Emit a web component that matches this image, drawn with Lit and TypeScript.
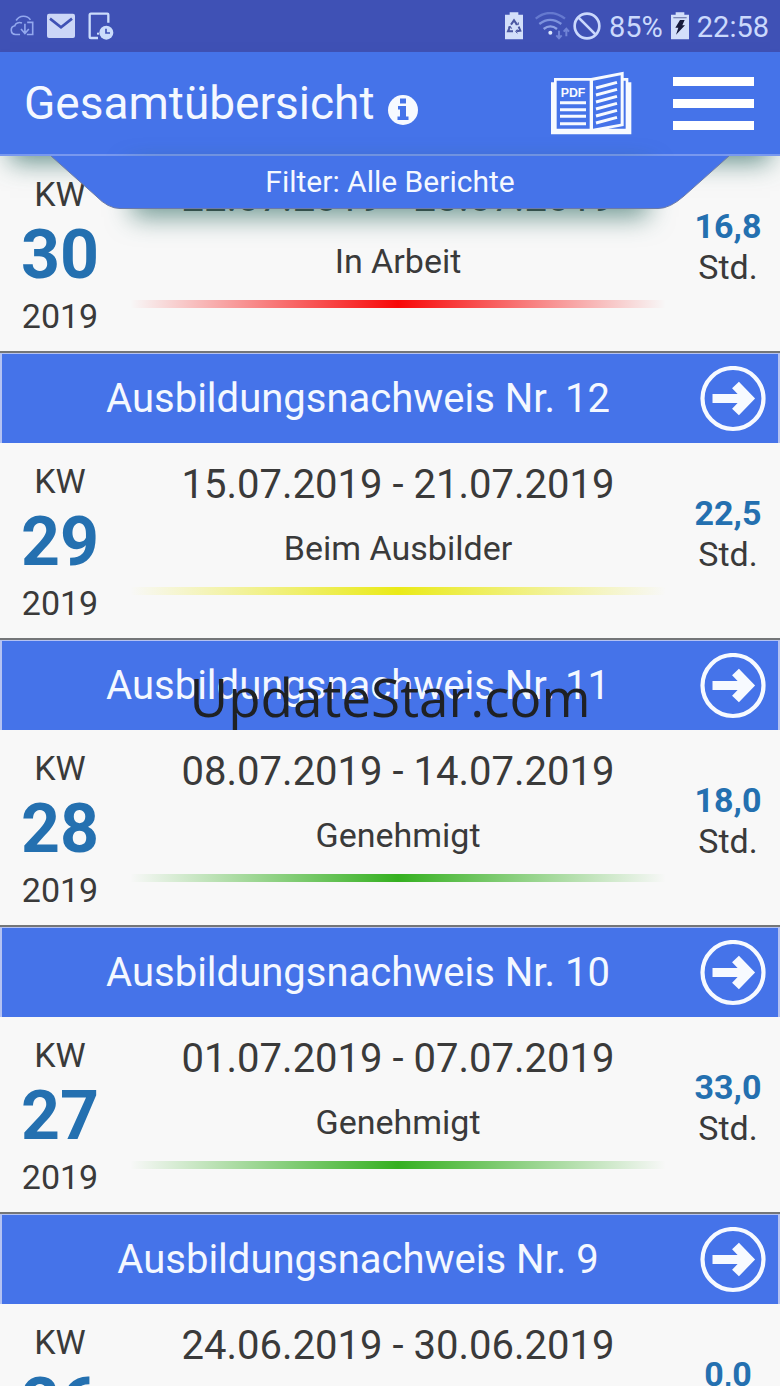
import { LitElement, html, css } from "lit";
import { customElement, property } from "lit/decorators.js";

interface Report {
  nr: number;
  week: number;
  year: number;
  range: string;
  status: string;
  tone: "red" | "yellow" | "green";
  hours: string;
}

const REPORTS: Report[] = [
  { nr: 12, week: 29, year: 2019, range: "15.07.2019 - 21.07.2019", status: "Beim Ausbilder", tone: "yellow", hours: "22,5" },
  { nr: 11, week: 28, year: 2019, range: "08.07.2019 - 14.07.2019", status: "Genehmigt", tone: "green", hours: "18,0" },
  { nr: 10, week: 27, year: 2019, range: "01.07.2019 - 07.07.2019", status: "Genehmigt", tone: "green", hours: "33,0" },
  { nr: 9, week: 26, year: 2019, range: "24.06.2019 - 30.06.2019", status: "Genehmigt", tone: "green", hours: "0,0" },
];

const CURRENT: Report = {
  nr: 13, week: 30, year: 2019, range: "22.07.2019 - 28.07.2019", status: "In Arbeit", tone: "red", hours: "16,8",
};

@customElement("status-bar")
class StatusBar extends LitElement {
  static styles = css`
    :host {
      display: flex;
      align-items: center;
      flex: none;
      height: 52px;
      padding: 0 11px 0 9px;
      box-sizing: border-box;
      background: #3f51b5;
      color: #cbd9fc;
      font-size: 29px;
      line-height: 32px;
    }
    svg { display: block; flex: none; }
    .left, .right { display: flex; align-items: center; }
    .left { gap: 13px; }
    .right { margin-left: auto; }
    .battery { margin-right: 12px; }
    .block { margin: 0 8px 0 2px; }
    .charge { margin: 0 8px; }
    .text { padding-top: 2px; }
  `;
  render() {
    return html`
      <div class="left">
        <svg width="25" height="26" viewBox="0 0 77 78" fill="none" stroke="#93a8ee" stroke-width="5">
          <path d="M22 22c10-17 34-17 44-2M34 65H20c-16 0-18-24-2-27 2-8 12-12 22-8M56 28h17v37H55M49 32v29M37 48l12 14 12-14" />
        </svg>
        <svg width="28" height="26" viewBox="0 0 84 78">
          <rect x="0" y="2" width="84" height="73" rx="6" fill="#cbd6f7" />
          <path d="M9 17l33 26 33-26" fill="none" stroke="#3f51b5" stroke-width="8" />
        </svg>
        <svg width="26" height="28" viewBox="0 0 78 84" fill="none">
          <path d="M61 32V8q0-3-3-3H9Q5 5 5 9v65q0 4 4 4h21" stroke="#cbdcfb" stroke-width="7" />
          <rect x="27" y="62" width="6" height="6" fill="#cbdcfb" />
          <circle cx="55" cy="62" r="21" fill="#cbdcfb" />
          <path d="M54 50v13h12" stroke="#3f51b5" stroke-width="5" />
        </svg>
      </div>
      <div class="right">
        <svg class="battery" width="18" height="28" viewBox="0 0 54 84">
          <path d="M14 1h26v7h14v74H0V8h14z" fill="#d3dffa" />
          <g fill="none" stroke="#4a56a0" stroke-width="6">
            <path d="M18 38l9-13 9 13M41 44l5 12-12 2M24 58H9l6-14" />
            <path d="M32 38h8v-7M37 52l-5 6 5 6M9 46l7-3 4 7" stroke-width="3" />
          </g>
        </svg>
        <svg width="36" height="28" viewBox="0 0 108 84" fill="none">
          <g stroke-width="7">
            <path d="M2 20q43-34 88 0" stroke="#6579cf" />
            <path d="M13 36q32-25 66 0" stroke="#7d92dd" />
            <path d="M26 51q20-16 40 0" stroke="#8ea1e4" />
          </g>
          <circle cx="46" cy="62" r="6" fill="#dde8fc" />
          <path d="M72 56v22M64 70l8 9 8-9M94 73V51M86 59l8-9 8 9" stroke="#7184d6" stroke-width="6" />
        </svg>
        <svg class="block" width="28" height="28" viewBox="0 0 84 84" fill="none" stroke="#cbd9fc" stroke-width="8">
          <circle cx="42" cy="42" r="37" />
          <path d="M16 16l52 52" />
        </svg>
        <span class="text">85%</span>
        <svg class="charge" width="18" height="28" viewBox="0 0 54 84">
          <path d="M14 1h26v7h14v74H0V8h14z" fill="#d3dffa" />
          <path d="M7 17h40" stroke="#7c87b5" stroke-width="4" />
          <path d="M27 24h14l-7 16h8L15 68l7-21h-9z" fill="#171b3c" />
        </svg>
        <span class="text">22:58</span>
      </div>
    `;
  }
}

@customElement("app-header")
class AppHeader extends LitElement {
  static styles = css`
    :host {
      display: block;
      flex: none;
      position: relative;
      z-index: 2;
    }
    .bar {
      display: flex;
      align-items: center;
      height: 102px;
      padding: 0 26px 0 24px;
      background: #4573e9;
      border-bottom: 2px solid #7898ef;
      box-shadow: 0 16px 24px -10px #2f6b62bb;
      color: #f4f8ff;
    }
    h1 {
      margin: 0;
      font-size: 46px;
      font-weight: 400;
      line-height: 56px;
    }
    button {
      border: 0;
      padding: 0;
      background: none;
      color: inherit;
      font: inherit;
      cursor: pointer;
    }
    svg { display: block; }
    .info { margin: 14px 0 0 14px; }
    .pdf { margin-left: auto; }
    .menu {
      display: grid;
      gap: 13px;
      width: 81px;
      margin-left: 41px;
    }
    .line { height: 9px; background: #ffffff; }
    .tab {
      position: absolute;
      top: 100%;
      left: 50px;
      right: 50px;
      height: 53px;
    }
    .shade {
      position: absolute;
      inset: 10px 88px 6px 88px;
      box-shadow: 0 8px 26px 6px #2f6b62aa;
    }
    .shape {
      position: absolute;
      inset: 0;
      width: 100%;
      height: 100%;
    }
    .filter {
      position: relative;
      display: block;
      width: 100%;
      height: 52px;
      color: #f4f8ff;
      font-size: 30px;
      line-height: 52px;
      text-align: center;
    }
  `;
  render() {
    return html`
      <header class="bar">
        <h1>Gesamtübersicht</h1>
        <button class="info" aria-label="Info">
          <svg width="30" height="30" viewBox="0 0 30 30">
            <circle cx="15" cy="15" r="15" fill="#f7faff" />
            <path d="M12 3.500h6v5h-6zM10 11h8v10.500h2.500V25h-11v-3.500H12V14.500h-2z" fill="#4573e9" />
          </svg>
        </button>
        <button class="pdf" aria-label="PDF">
          <svg width="82" height="64" viewBox="60 48 246 192">
            <path d="M63 82h9V69h111l98-19v19h14v13h9v156H63z" fill="#f7faff" />
            <path d="M80 77h99v144H80zM189 77l83-16v145l-83 15zM281 77h6v144h-52l46-8z" fill="#4573e9" />
            <path d="M90 143h78M90 164h78M90 184h78M90 206h78M198 99l63-17M198 120l63-17M198 141l63-17M198 162l63-17M198 183l63-17M198 204l63-17" fill="none" stroke="#f7faff" stroke-width="9" />
            <text x="92" y="125" font-family="Liberation Sans, sans-serif" font-weight="700" font-size="37" fill="#f7faff">PDF</text>
          </svg>
        </button>
        <button class="menu" aria-label="Menü">
          <span class="line"></span><span class="line"></span><span class="line"></span>
        </button>
      </header>
      <div class="tab">
        <div class="shade"></div>
        <svg class="shape" viewBox="0 0 680 53" preserveAspectRatio="none">
          <path d="M0 -1L46 40Q58 52.500 70 52.500H608Q620 52.500 634 40L680 -1z" fill="#4573e9" />
          <path d="M1 0L46 40Q58 52.500 70 52.500H608Q620 52.500 634 40L679 0" fill="none" stroke="#6c7ba6" />
        </svg>
        <button class="filter">Filter: Alle Berichte</button>
      </div>
    `;
  }
}

@customElement("report-body")
class ReportBody extends LitElement {
  @property({ attribute: false }) report!: Report;
  static styles = css`
    :host {
      display: grid;
      grid-template-columns: 120px 1fr 104px;
      height: 195px;
      background: #f8f8f8;
      color: #3a3a3a;
      font-size: 34px;
      line-height: 40px;
      text-align: center;
    }
    .week { padding-top: 18px; }
    .number {
      color: #2470b0;
      font-size: 68px;
      font-weight: 700;
      line-height: 82px;
    }
    .middle {
      display: grid;
      align-content: start;
      gap: 20px;
      padding: 18px 10px 0;
    }
    .range { font-size: 40px; line-height: 48px; }
    .status { line-height: 38px; }
    .stripe { height: 8px; }
    .red { background: linear-gradient(90deg, #ff000000, #f80808 50%, #ff000000); }
    .yellow { background: linear-gradient(90deg, #eaea1000, #eaea18 50%, #eaea1000); }
    .green { background: linear-gradient(90deg, #30b01000, #35b020 50%, #30b01000); }
    .time { padding-top: 50px; line-height: 41px; }
    .hours { color: #2470b0; font-weight: 700; }
  `;
  render() {
    const r = this.report;
    return html`
      <div class="week">
        <div>KW</div>
        <div class="number">${r.week}</div>
        <div>${r.year}</div>
      </div>
      <div class="middle">
        <div class="range">${r.range}</div>
        <div class="status">${r.status}</div>
        <div class="stripe ${r.tone}"></div>
      </div>
      <div class="time">
        <div class="hours">${r.hours}</div>
        <div>Std.</div>
      </div>
    `;
  }
}

@customElement("report-card")
class ReportCard extends LitElement {
  @property({ attribute: false }) report!: Report;
  static styles = css`
    :host { display: block; border-top: 2px solid #747678; }
    .head {
      display: flex;
      align-items: center;
      height: 89px;
      padding: 0 12px 0 14px;
      border: solid #b4c2f2;
      border-width: 1px 2px 0;
      background: #4573e9;
      color: #f4f8ff;
    }
    h2 {
      flex: 1;
      margin: 0;
      font-size: 40px;
      font-weight: 400;
      line-height: 48px;
      text-align: center;
    }
    button { border: 0; padding: 0; background: none; cursor: pointer; }
    svg { display: block; }
  `;
  render() {
    return html`
      <div class="head">
        <h2>Ausbildungsnachweis Nr. ${this.report.nr}</h2>
        <button aria-label="Öffnen">
          <svg width="66" height="66" viewBox="0 0 66 66" fill="none" stroke="#f7faff">
            <circle cx="33" cy="32.500" r="30.500" stroke-width="4.200" />
            <path d="M12.500 32.500h36" stroke-width="9" />
            <path d="M35.500 19l13 13.500-13 13.500" stroke-width="9.500" />
          </svg>
        </button>
      </div>
      <report-body .report=${this.report}></report-body>
    `;
  }
}

@customElement("app-root")
class AppRoot extends LitElement {
  static styles = css`
    :host {
      display: flex;
      flex-direction: column;
      position: relative;
      height: 100vh;
      overflow: hidden;
      background: #f8f8f8;
      font-family: Roboto, "Liberation Sans", sans-serif;
    }
    .list { flex: 1; min-height: 0; overflow: hidden; }
    .mark {
      position: absolute;
      inset: 0;
      z-index: 3;
      display: grid;
      place-items: center;
      padding-top: 8px;
      pointer-events: none;
      color: #1f2124;
      font-family: "Open Sans", "Noto Sans", sans-serif;
      font-size: 53px;
      line-height: 72px;
    }
  `;
  render() {
    return html`
      <status-bar></status-bar>
      <app-header></app-header>
      <main class="list">
        <report-body .report=${CURRENT}></report-body>
        ${REPORTS.map((r) => html`<report-card .report=${r}></report-card>`)}
      </main>
      <div class="mark">UpdateStar.com</div>
    `;
  }
}
